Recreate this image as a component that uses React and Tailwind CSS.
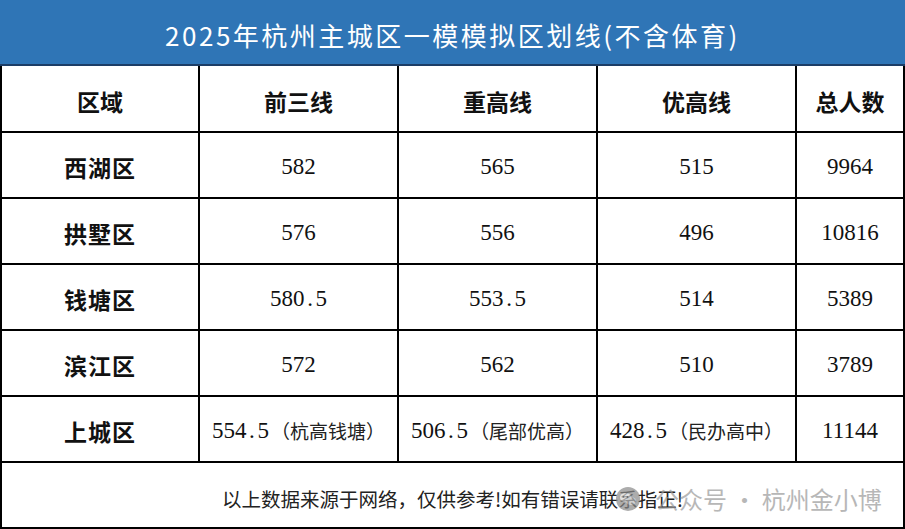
import React from "react";

const cjk = { fontFamily: '"Noto Sans CJK SC", "Noto Sans", sans-serif' };
const serif = { fontFamily: '"Liberation Serif", "Noto Sans CJK SC", serif' };

const rows = [
  { area: "西湖区", a: "582", b: "565", c: "515", total: "9964" },
  { area: "拱墅区", a: "576", b: "556", c: "496", total: "10816" },
  { area: "钱塘区", a: "580.5", b: "553.5", c: "514", total: "5389" },
  { area: "滨江区", a: "572", b: "562", c: "510", total: "3789" },
  {
    area: "上城区",
    a: "554.5",
    an: "（杭高钱塘）",
    b: "506.5",
    bn: "（尾部优高）",
    c: "428.5",
    cn: "（民办高中）",
    total: "11144",
  },
];

// numbers in the picture use a half-width dot, so give it a digit's width
const Num = ({ value }) => {
  const parts = value.split(".");
  return (
    <span style={serif} className="text-[23px] text-[#111]">
      {parts[0]}
      {parts.length > 1 && (
        <>
          <span className="inline-block w-[11px] text-center">.</span>
          {parts[1]}
        </>
      )}
    </span>
  );
};

const Cell = ({ value, note }) => (
  <div className="bg-white flex items-center justify-center pt-[4px]">
    <Num value={value} />
    {note && (
      <span style={cjk} className="text-[19px] text-[#222] ml-[2px]">
        {note}
      </span>
    )}
  </div>
);

const App = () => {
  return (
    <div className="w-[905px] h-[529px] bg-black overflow-hidden">
      {/* title */}
      <div className="h-[66px] bg-[#2f75b6] border-b-2 border-[#1c3d66] flex items-center justify-center">
        <p
          style={cjk}
          className="text-white text-[26px] tracking-[2.5px] pt-[4px]"
        >
          2025年杭州主城区一模模拟区划线(不含体育)
        </p>
      </div>

      {/* table */}
      <div className="grid grid-cols-[196px_197px_197px_197px_106px] grid-rows-[65px_repeat(5,64px)_64px] gap-[2px] px-[2px] pb-[2px]">
        {["区域", "前三线", "重高线", "优高线", "总人数"].map((h) => (
          <div
            key={h}
            className="bg-white flex items-center justify-center pt-[6px]"
          >
            <span style={cjk} className="text-[23px] font-bold text-[#111]">
              {h}
            </span>
          </div>
        ))}

        {rows.map((r) => (
          <React.Fragment key={r.area}>
            <div className="bg-white flex items-center justify-center pt-[5px]">
              <span
                style={cjk}
                className="text-[23px] font-bold text-[#111] tracking-[1px]"
              >
                {r.area}
              </span>
            </div>
            <Cell value={r.a} note={r.an} />
            <Cell value={r.b} note={r.bn} />
            <Cell value={r.c} note={r.cn} />
            <Cell value={r.total} />
          </React.Fragment>
        ))}

        {/* footer note */}
        <div className="col-span-5 bg-white relative flex items-center justify-center pt-[8px]">
          <span style={cjk} className="text-[19.5px] text-[#222]">
            以上数据来源于网络，仅供参考!如有错误请联系指正!
          </span>

          {/* watermark */}
          <div className="absolute left-[613px] top-[18px] flex items-center opacity-70">
            <svg width="26" height="26" viewBox="0 0 26 26">
              <circle cx="13" cy="13" r="12" fill="#8a8a8a" />
              <ellipse cx="10.5" cy="11.5" rx="5.5" ry="4.5" fill="#d8d8d8" />
              <ellipse cx="16" cy="15" rx="5" ry="4" fill="#bdbdbd" />
              <circle cx="8.5" cy="11" r="0.9" fill="#8a8a8a" />
              <circle cx="12.5" cy="11" r="0.9" fill="#8a8a8a" />
            </svg>
            <span
              style={cjk}
              className="text-[24px] text-[#9a9a9a] ml-[14px] whitespace-nowrap"
            >
              公众号 · 杭州金小博
            </span>
          </div>
        </div>
      </div>
    </div>
  );
};

export default App;
